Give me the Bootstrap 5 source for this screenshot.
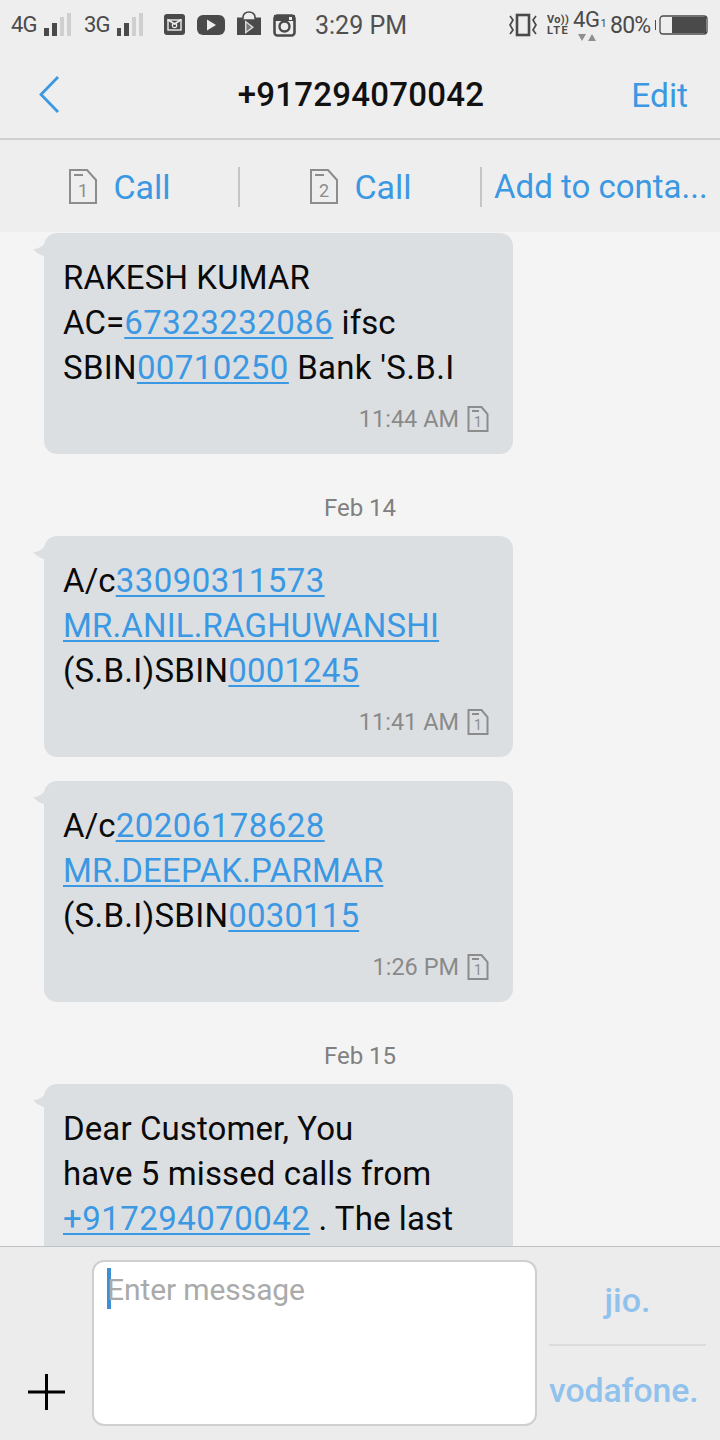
<!DOCTYPE html>
<html lang="en"><head><meta charset="utf-8"><title>Messages</title>
<link href="https://cdn.jsdelivr.net/npm/bootstrap@5.3.0/dist/css/bootstrap.min.css" rel="stylesheet">
<style>
html,body{margin:0;background:#f4f4f4}
body{font-family:Roboto,"Liberation Sans",sans-serif;width:720px;height:1440px;overflow:hidden}
.phone{width:720px;height:1440px}
.sbar{height:50px;background:#eeeeee;color:#4a4a4a;padding:0 0 0 11px}
.sbar span{line-height:1}
.net{font-size:22px;letter-spacing:-.9px;width:26px}
.gap6{margin-left:6px}.gap10{margin-left:10px}.gap17{margin-left:17px}.gap11{margin-left:11px}.gap12{margin-left:12px}
.clock{font-size:25px;margin-left:19px;color:#505050}
.rightstat{margin-left:auto;padding-right:12px}
.volte{width:22px;margin-left:10px;font-weight:700;color:#4a4a4a;flex:none}
.volte .vo{font-size:11px;line-height:11px!important;letter-spacing:.3px;white-space:nowrap}
.volte .lt{font-size:11px;line-height:11px!important;letter-spacing:1.5px}
.fourgwrap{width:32px;margin-left:4px;padding-top:3px;flex:none}
.fourg{font-size:22px;line-height:17px!important;letter-spacing:-.4px;white-space:nowrap}
.fourg small{font-size:11px;margin-left:1px}
.triup{margin:2px 0 0 4px}
.pct{font-size:23px;margin-left:5px;letter-spacing:-.8px;width:40px;white-space:nowrap;flex:none}
.battery{margin-left:5px;flex:none}
.navhead{position:relative;height:90px;background:#eeeeee;border-bottom:2px solid #cfcfcf;padding:2px 32px 0 38px}
.navtitle{font-size:33px;font-weight:500;color:#111;position:absolute;left:0;right:0;text-align:center;letter-spacing:.25px;padding-left:2px}
.editlink{font-size:33.5px;color:#3b98e3;margin:2px 0 0 auto}
.actions{height:92px;background:#eeeeee;font-size:34px;color:#3b98e3;padding-top:2px}
.actcell{width:240px;height:40px;gap:15px;padding-left:1px}
.actcell.lastcell{justify-content:flex-start!important;padding-left:12px;white-space:nowrap;font-size:33px}
.actsep{border-right:2px solid #c6c6c6}
.actsep2{border-left:2px solid #c6c6c6}
.thread{overflow:hidden;background:#f4f4f4;padding-top:1px}
.bubble{position:relative;width:469px;margin-left:44px;background:#dcdfe2;border-radius:13px;padding:22px 20px 0 19px;font-size:33px;line-height:45px;color:#0a0a0a;height:221px;margin-bottom:24px;letter-spacing:.1px}
.bubble::before{content:"";position:absolute;left:-11px;top:10px;width:14px;height:14px;background:#dcdfe2;clip-path:path('M0 6 Q7 6 12 0 L14 14 Q5 12 0 6 Z')}
.bubble a{color:#3b98e3;text-decoration:underline;text-decoration-thickness:2px;text-underline-offset:3px}
.bubble a.dg{letter-spacing:.45px}
.bubble a.nm{letter-spacing:.15px}
.wider{letter-spacing:.3px}
.stamp{font-size:23.5px;line-height:30px;color:#8a8a8a;margin-top:14px;gap:8px;padding-right:4px;letter-spacing:0}
.dayline{font-size:24px;color:#808080;text-align:center;line-height:30px;margin:0 0 13px;padding-top:15px}
.bubble.longone{height:300px;margin-bottom:0}
.composer{height:194px;background:#ececec;border-top:1px solid #bfc3c6;position:relative}
.plusbox{width:92px;padding:0 0 30px 28px}
.inputbox{width:445px;height:166px;margin-top:13px;background:#fff;border:2px solid #cfcfcf;border-radius:12px;padding:11px 0 0 13px;font-size:30px;color:#aaa;line-height:34px;letter-spacing:-.1px}
.caret{display:inline-block;width:4px;height:41px;background:#3d90d3;vertical-align:top;margin:-5px -4px 0 0}
.simcol{width:162px;padding:13px 0 0 12px;font-weight:500;color:#90c2ec}
.simname{height:84px;width:157px;font-size:34px;text-align:center;padding-top:20px;line-height:40px}
.simname.low{border-top:2px solid #dcdcdc;height:auto;padding:25px 0 0;font-size:33.8px;text-align:left;white-space:nowrap;letter-spacing:-.1px}
</style></head>
<body>
<div class="phone d-flex flex-column">
 <div class="sbar d-flex align-items-center flex-shrink-0">
  <span class="net">4G</span>
  <svg width="31" height="24" class="gap6" viewBox="0 0 31 24"><rect x="1" y="15" width="5" height="8" fill="#4a4a4a"/><rect x="9" y="10" width="5" height="13" fill="#4a4a4a"/><rect x="17" y="4" width="4" height="19" fill="#cfcfcf"/><rect x="24" y="0" width="4" height="23" fill="#cfcfcf"/></svg>
  <span class="net gap10">3G</span>
  <svg width="31" height="24" class="gap6" viewBox="0 0 31 24"><rect x="1" y="15" width="4" height="8" fill="#4a4a4a"/><rect x="8" y="10" width="5" height="13" fill="#4a4a4a"/><rect x="16" y="4" width="4" height="19" fill="#cfcfcf"/><rect x="23" y="0" width="4" height="23" fill="#cfcfcf"/></svg>
  <svg width="22" height="22" class="gap17" viewBox="0 0 22 22"><rect width="21" height="21" rx="3" fill="#4a4a4a"/><rect x="4" y="6" width="13" height="10" fill="none" stroke="#eee" stroke-width="1.4"/><path d="M3.500 5.500l7 4.500 7-4.500" fill="none" stroke="#eee" stroke-width="1.600"/><circle cx="10.500" cy="11.500" r="2.200" fill="none" stroke="#eee" stroke-width="1.200"/></svg>
  <svg width="28" height="20" class="gap11" viewBox="0 0 28 20"><rect width="28" height="20" rx="6" fill="#4a4a4a"/><path d="M10 4.500l9 5.500-9 5.500z" fill="#eee"/></svg>
  <svg width="24" height="24" class="gap12 mb-1" viewBox="0 0 24 26" preserveAspectRatio="none"><path d="M6 9V6.500a6 5.500 0 0 1 12 0V9" fill="none" stroke="#4a4a4a" stroke-width="1.600"/><path d="M0 7h6v2h12V7h6v19H0z" fill="#4a4a4a"/><path d="M8 10l9 7.500-9 7.500z" fill="#d8d8d8"/><path d="M9.500 13l5 4.500-5 4.500z" fill="#777"/></svg>
  <svg width="23" height="23" class="gap12" viewBox="0 0 23 23"><rect x="1.500" y="1.500" width="20" height="20" rx="3" fill="none" stroke="#4a4a4a" stroke-width="2.600"/><rect x="1" y="1" width="21" height="6" fill="#4a4a4a"/><circle cx="11.500" cy="12.500" r="5" fill="none" stroke="#4a4a4a" stroke-width="2.400"/><rect x="16" y="3" width="3" height="3" fill="#eee"/></svg>
  <span class="clock">3:29 PM</span>
  <div class="rightstat d-flex align-items-center">
   <svg width="28" height="24" viewBox="0 0 28 24"><rect x="8" y="2" width="12" height="20" fill="none" stroke="#4a4a4a" stroke-width="2.600"/><path d="M1 3l3 4-3 5 3 5-3 4M27 3l-3 4 3 5-3 5 3 4" fill="none" stroke="#4a4a4a" stroke-width="1.700"/></svg>
   <span class="d-flex flex-column text-center volte"><span class="vo">Vo))</span><span class="lt">LTE</span></span>
   <span class="d-flex flex-column align-items-start fourgwrap"><span class="fourg">4G<small>1</small></span><svg class="triup" width="20" height="8" viewBox="0 0 20 8"><path d="M1 0h8l-4 7zM11 7l4-7 4 7z" fill="#8f8f8f"/></svg></span>
   <span class="pct">80%</span>
   <svg width="53" height="22" class="battery" viewBox="0 0 53 22"><path d="M0 6v10" stroke="#4a4a4a" stroke-width="2"/><rect x="5" y="2" width="47" height="18" rx="3" fill="none" stroke="#4a4a4a" stroke-width="1.300"/><rect x="17" y="3" width="34" height="16" fill="#4a4a4a"/></svg>
  </div>
 </div>
 <div class="navhead d-flex align-items-center flex-shrink-0">
  <div class="navtitle">+917294070042</div>
  <svg width="24" height="38" viewBox="0 0 24 38" class="position-relative"><path d="M20 1L3 18.500l17 17.500" fill="none" stroke="#3b98e3" stroke-width="2.800"/></svg>
  <span class="editlink position-relative">Edit</span>
 </div>
 <div class="actions d-flex align-items-center flex-shrink-0">
  <div class="actcell actsep d-flex align-items-center justify-content-center">
   <svg width="30" height="36" viewBox="0 0 30 36"><path d="M2 1h17l9 10v23H2z" fill="none" stroke="#8c8c8c" stroke-width="2"/><path d="M6 6h9" stroke="#8c8c8c" stroke-width="2"/><text x="15" y="28" text-anchor="middle" font-size="18" fill="#8c8c8c" font-family="Roboto">1</text></svg>
   <span>Call</span>
  </div>
  <div class="actcell d-flex align-items-center justify-content-center">
   <svg width="30" height="36" viewBox="0 0 30 36"><path d="M2 1h17l9 10v23H2z" fill="none" stroke="#8c8c8c" stroke-width="2"/><path d="M6 6h9" stroke="#8c8c8c" stroke-width="2"/><text x="15" y="28" text-anchor="middle" font-size="18" fill="#8c8c8c" font-family="Roboto">2</text></svg>
   <span>Call</span>
  </div>
  <div class="actcell actsep2 lastcell d-flex align-items-center">Add to conta...</div>
 </div>
 <div class="thread flex-grow-1">
  <div class="bubble">RAKESH KUMAR<br>AC=<a class="dg" href="#">67323232086</a> ifsc<br><span class="wider">SBIN</span><a class="dg" href="#">00710250</a> <span class="wider">Bank 'S.B.I</span>
   <div class="stamp d-flex justify-content-end align-items-center">11:44 AM <svg width="22" height="26" viewBox="0 0 22 26"><path d="M1.500 1h13l6 7v17h-19z" fill="none" stroke="#8c8c8c" stroke-width="2"/><path d="M5 5h7" stroke="#8c8c8c" stroke-width="2"/><text x="11" y="21" text-anchor="middle" font-size="14" fill="#8c8c8c" font-family="Roboto">1</text></svg></div>
  </div>
  <div class="dayline">Feb 14</div>
  <div class="bubble">A/c<a class="dg" href="#">33090311573</a><br><a class="nm" href="#">MR.ANIL.RAGHUWANSHI</a><br><span class="wider">(S.B.I)SBIN</span><a class="nm" href="#">0001245</a>
   <div class="stamp d-flex justify-content-end align-items-center">11:41 AM <svg width="22" height="26" viewBox="0 0 22 26"><path d="M1.500 1h13l6 7v17h-19z" fill="none" stroke="#8c8c8c" stroke-width="2"/><path d="M5 5h7" stroke="#8c8c8c" stroke-width="2"/><text x="11" y="21" text-anchor="middle" font-size="14" fill="#8c8c8c" font-family="Roboto">1</text></svg></div>
  </div>
  <div class="bubble">A/c<a class="dg" href="#">20206178628</a><br><a class="nm" href="#">MR.DEEPAK.PARMAR</a><br><span class="wider">(S.B.I)SBIN</span><a class="nm" href="#">0030115</a>
   <div class="stamp d-flex justify-content-end align-items-center">1:26 PM <svg width="22" height="26" viewBox="0 0 22 26"><path d="M1.500 1h13l6 7v17h-19z" fill="none" stroke="#8c8c8c" stroke-width="2"/><path d="M5 5h7" stroke="#8c8c8c" stroke-width="2"/><text x="11" y="21" text-anchor="middle" font-size="14" fill="#8c8c8c" font-family="Roboto">1</text></svg></div>
  </div>
  <div class="dayline">Feb 15</div>
  <div class="bubble longone">Dear Customer, You<br>have 5 missed calls from<br><a class="dg" href="#">+917294070042</a> . The last</div>
 </div>
 <div class="composer d-flex flex-shrink-0">
  <div class="plusbox d-flex align-items-end"><svg width="37" height="36" viewBox="0 0 37 36"><path d="M18.500 0v36M0 18h37" stroke="#000" stroke-width="3"/></svg></div>
  <div class="inputbox"><span class="caret"></span>Enter message</div>
  <div class="simcol"><div class="simname">jio.</div><div class="simname low">vodafone.</div></div>
 </div>
</div>
</body></html>
